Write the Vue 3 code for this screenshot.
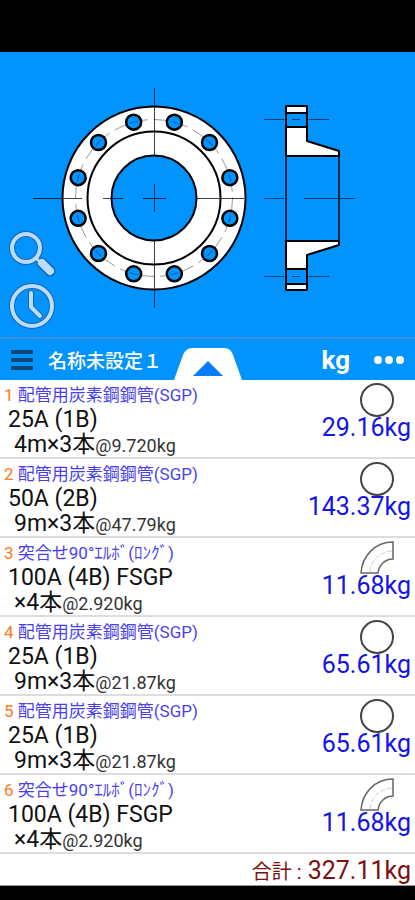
<template>
  <main class="app">
    <!-- 図面 -->
    <section class="stage">
      <svg class="stage__drawing" viewBox="0 0 415 285" fill="none" role="img" aria-label="フランジ">
        <!-- 正面図 -->
        <g stroke="#000" stroke-width="2">
          <circle cx="154" cy="146" r="91.5" fill="#fff"/>
          <circle cx="154" cy="146" r="66.5"/>
          <circle cx="154" cy="146" r="42.5" fill="#0194ff"/>
        </g>
        <circle cx="154" cy="146" r="78.5" stroke="#999" stroke-width="1" stroke-dasharray="22 6 7 6"/>
        <circle
          v-for="h in holes" :key="h.angle"
          :cx="h.x" :cy="h.y" r="7.5"
          fill="#0194ff" stroke="#000" stroke-width="2.5"
        />
        <path
          v-for="h in holes" :key="'c' + h.angle"
          d="M-4 0H4" :transform="`translate(${h.x} ${h.y}) rotate(${h.angle + 90})`"
          stroke="#05579a" stroke-width="1"
        />
        <g stroke="#000" stroke-opacity="0.75" stroke-width="1">
          <path d="M33 146.500H82M103 146.500H123M143 146.500H166M197 146.500H244"/>
          <path d="M154.500 36V104M154.500 132V160M154.500 188V256"/>
        </g>
        <!-- 断面図 -->
        <g stroke="#000" stroke-width="2" stroke-linejoin="round">
          <path d="M286 54H307V89L339 99V104H286Z" fill="#fff"/>
          <path d="M286 189H339V193L307 203V238H286Z" fill="#fff"/>
          <path d="M286 61H307V75H286ZM286 217H307V232H286Z" fill="#0194ff"/>
          <path d="M286 104V189M339 104V189" stroke-width="1.5"/>
        </g>
        <g stroke="#033c6b" stroke-width="1">
          <path d="M264 67.500H284M292 67.500H300M309 67.500H329"/>
          <path d="M264 146.500H284M304 146.500H355"/>
          <path d="M264 224.500H284M292 224.500H300M309 224.500H329"/>
        </g>
      </svg>
      <div class="stage__tools">
        <button class="stage__tool" type="button" aria-label="検索">
          <svg width="48" height="48" viewBox="0 0 48 48" fill="none" stroke-linecap="round">
            <circle cx="18" cy="18" r="14" stroke="#1467b0" stroke-width="6"/>
            <path d="M29 29l4 4" stroke="#1467b0" stroke-width="6"/>
            <path d="M34 33l8 8" stroke="#1467b0" stroke-width="11"/>
            <circle cx="18" cy="18" r="14" stroke="#b9dcff" stroke-width="4"/>
            <path d="M29 29l4 4" stroke="#b9dcff" stroke-width="3"/>
            <path d="M34 33l8 8" stroke="#b9dcff" stroke-width="8"/>
          </svg>
        </button>
        <button class="stage__tool" type="button" aria-label="履歴">
          <svg width="48" height="48" viewBox="0 0 48 48" fill="none" stroke-linecap="round" stroke-linejoin="round">
            <circle cx="24" cy="24" r="20" stroke="#1467b0" stroke-width="6"/>
            <circle cx="24" cy="24" r="20" stroke="#b9dcff" stroke-width="4"/>
            <path d="M23 11V25L32 34" stroke="#1467b0" stroke-width="6"/>
            <path d="M23 11V25L32 34" stroke="#b9dcff" stroke-width="4"/>
          </svg>
        </button>
      </div>
    </section>

    <!-- ツールバー -->
    <header class="bar">
      <div class="bar__side">
        <button class="bar__btn" type="button" aria-label="メニュー">
          <svg width="22" height="20" viewBox="0 0 22 20" fill="#0d4672">
            <path d="M0 0h22v4H0zM0 8h22v4H0zM0 16h22v4H0z"/>
          </svg>
        </button>
        <h1 class="bar__title">名称未設定１</h1>
      </div>
      <button class="bar__tab" type="button" aria-label="開く">
        <svg width="68" height="32" viewBox="0 0 68 32">
          <path d="M0 32L9 7Q12 0 18 0H50Q57 0 59 7L68 32Z" fill="#fff"/>
          <path d="M19 28L34 13L49 28Z" fill="#0b7bff"/>
        </svg>
      </button>
      <div class="bar__side bar__side--end">
        <span class="bar__unit">kg</span>
        <button class="bar__btn" type="button" aria-label="その他">
          <svg width="30" height="8" viewBox="0 0 30 8" fill="#fff">
            <circle cx="4" cy="4" r="4"/>
            <circle cx="15" cy="4" r="4"/>
            <circle cx="26" cy="4" r="4"/>
          </svg>
        </button>
      </div>
    </header>

    <!-- 明細 -->
    <ol class="list">
      <li v-for="(item, i) in items" :key="i" class="row">
        <div class="row__main">
          <p class="row__name"><span class="row__no">{{ i + 1 }}</span> {{ item.name }}</p>
          <p class="row__size">{{ item.size }}</p>
          <p class="row__qty">{{ item.qty }}<span class="row__each">@{{ item.each }}kg</span></p>
        </div>
        <div class="row__side">
          <svg class="row__icon" width="34" height="34" viewBox="0 0 34 34" fill="none">
            <circle v-if="item.shape === 'pipe'" cx="17" cy="17" r="16" stroke="#444" stroke-width="2"/>
            <template v-else>
              <path d="M1 32C2 15 15 1 33 1V18C25 18 19 24 18 32Z" stroke="#666" stroke-width="1.5"/>
              <path d="M10 31C11 19 20 11 32 10" stroke="#ccc" stroke-dasharray="5 2"/>
            </template>
          </svg>
          <span class="row__weight">{{ item.weight.toFixed(2) }}kg</span>
        </div>
      </li>
    </ol>
    <p class="total"><span class="total__label">合計 :</span> {{ total }}kg</p>
  </main>
</template>

<script setup>
import { computed } from 'vue'

const pipe = '配管用炭素鋼鋼管(SGP)'
const elbow = '突合せ90°ｴﾙﾎﾞ(ﾛﾝｸﾞ)'

const items = [
  { name: pipe, size: '25A (1B)', qty: '4m×3本', each: '9.720', weight: 29.16, shape: 'pipe' },
  { name: pipe, size: '50A (2B)', qty: '9m×3本', each: '47.79', weight: 143.37, shape: 'pipe' },
  { name: elbow, size: '100A (4B) FSGP', qty: '×4本', each: '2.920', weight: 11.68, shape: 'elbow' },
  { name: pipe, size: '25A (1B)', qty: '9m×3本', each: '21.87', weight: 65.61, shape: 'pipe' },
  { name: pipe, size: '25A (1B)', qty: '9m×3本', each: '21.87', weight: 65.61, shape: 'pipe' },
  { name: elbow, size: '100A (4B) FSGP', qty: '×4本', each: '2.920', weight: 11.68, shape: 'elbow' }
]

const total = computed(() => items.reduce((sum, item) => sum + item.weight, 0).toFixed(2))

// ボルト穴は30度ごとに12個
const holes = Array.from({ length: 12 }, (_, i) => {
  const angle = 15 + i * 30
  const rad = angle * Math.PI / 180
  return { angle, x: 154 + 78.5 * Math.cos(rad), y: 146 + 78.5 * Math.sin(rad) }
})
</script>

<style>
body {
  background: #000;
}
</style>

<style scoped>
.app {
  padding: 52px 0 16px;
  font-family: Roboto, "Noto Sans CJK JP", sans-serif;
  color: #111;
}

button {
  display: flex;
  padding: 0;
  border: 0;
  background: none;
}

p, h1, ol {
  margin: 0;
  padding: 0;
}

/* ===== 図面 ===== */
.stage {
  position: relative;
  background: #0194ff;
}

.stage__drawing {
  display: block;
  width: 100%;
}

.stage__tools {
  position: absolute;
  left: 8px;
  bottom: 7px;
  display: flex;
  flex-direction: column;
  gap: 4px;
}

/* ===== ツールバー ===== */
.bar {
  display: grid;
  grid-template-columns: 1fr auto 1fr;
  height: 43px;
  box-sizing: border-box;
  border-top: 2px solid #3d8fda;
  background: #0194ff;
  color: #fff;
}

.bar__side {
  display: flex;
  align-items: center;
  gap: 15px;
  padding: 0 11px;
}

.bar__side--end {
  justify-content: flex-end;
  gap: 24px;
}

.bar__title {
  font-size: 19px;
  font-weight: 500;
  white-space: nowrap;
}

.bar__tab {
  align-self: end;
}

.bar__unit {
  font-size: 26px;
  font-weight: 700;
}

/* ===== 明細 ===== */
.list {
  list-style: none;
  background: #fff;
}

.row {
  display: flex;
  justify-content: space-between;
  height: 79px;
  box-sizing: border-box;
  padding: 3px 4px 0;
  border-bottom: 2px solid #ddd;
}

.row__name {
  font-size: 17px;
  line-height: 24px;
  color: #4a3ff0;
}

.row__no {
  color: #ff7a22;
}

.row__size {
  padding-left: 4px;
  font-size: 23px;
  line-height: 26px;
}

.row__qty {
  padding-left: 10px;
  font-size: 23px;
  line-height: 24px;
}

.row__each {
  font-size: 18px;
  color: #333;
}

.row__side {
  display: flex;
  flex-direction: column;
  align-items: flex-end;
}

.row__icon {
  margin-right: 17px;
}

.row__weight {
  font-size: 25px;
  line-height: 22px;
  color: #1414e6;
}

/* ===== 合計 ===== */
.total {
  padding: 4px 4px 0;
  border-bottom: 1px solid #999;
  background: #fff;
  font-size: 25px;
  line-height: 26px;
  text-align: right;
  color: #7c0f0f;
}

.total__label {
  font-size: 20px;
}
</style>
